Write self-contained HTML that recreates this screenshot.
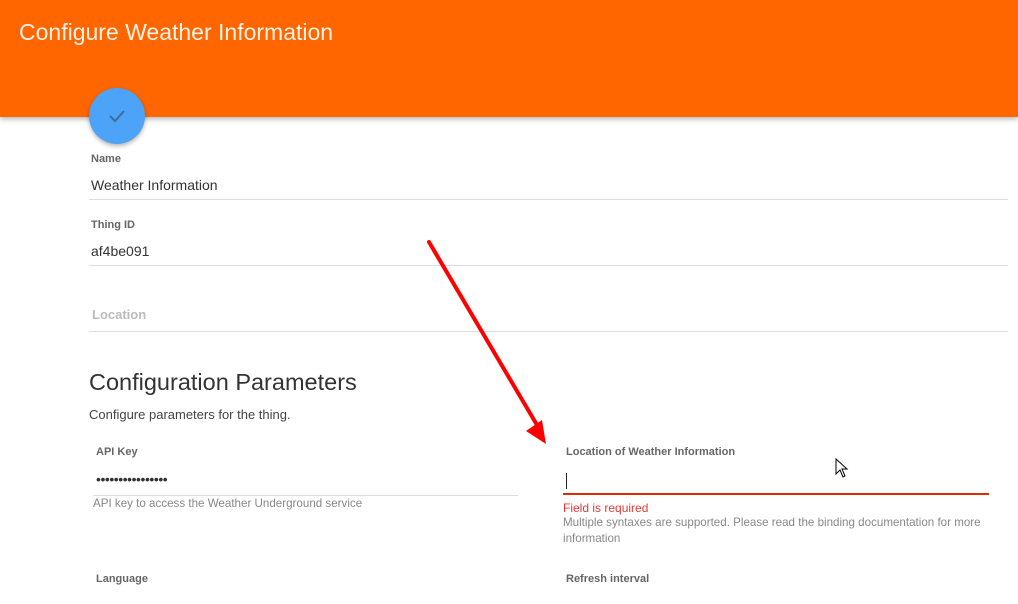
<!DOCTYPE html>
<html><head><meta charset="utf-8"><style>
body{margin:0;width:1018px;height:604px;overflow:hidden;background:#fff;font-family:"Liberation Sans",sans-serif;position:relative}
.a{position:absolute;white-space:nowrap}
.hdr{position:absolute;left:0;top:0;width:1018px;height:117px;background:#ff6600;box-shadow:0 2px 5px rgba(0,0,0,.3)}
.lbl{font-size:11px;font-weight:bold;color:#666}
.val{font-size:14px;color:#333}
.ln{position:absolute;height:1px;background:#ddd}
.hint{font-size:11.6px;color:#888}
</style></head><body>
<div class="hdr"></div>
<div class="a" style="left:19px;top:19px;font-size:23px;color:#fff3e6">Configure Weather Information</div>
<div class="a" style="left:89px;top:88px;width:56px;height:56px;border-radius:50%;background:#4da3f7;box-shadow:0 2px 5px rgba(0,0,0,.3)"></div>
<svg class="a" style="left:107px;top:106px" width="20" height="20"><path d="M3 10 L8 15 L17 5" fill="none" stroke="#3e6d9c" stroke-width="2"/></svg>

<div class="a lbl" style="left:91px;top:153px">Name</div>
<div class="a val" style="left:91px;top:177px">Weather Information</div>
<div class="ln" style="left:89px;top:199px;width:919px"></div>
<div class="a lbl" style="left:91px;top:219px">Thing ID</div>
<div class="a val" style="left:91px;top:243px">af4be091</div>
<div class="ln" style="left:89px;top:265px;width:919px"></div>
<div class="a" style="left:92px;top:307px;font-size:13px;font-weight:bold;color:#bbb">Location</div>
<div class="ln" style="left:89px;top:331px;width:919px"></div>

<div class="a" style="left:89px;top:369px;font-size:23.5px;color:#333">Configuration Parameters</div>
<div class="a" style="left:89px;top:407px;font-size:13px;color:#444">Configure parameters for the thing.</div>

<div class="a lbl" style="left:96px;top:446px">API Key</div>
<div class="a" style="left:96px;top:471px;font-size:14px;color:#333;letter-spacing:-0.45px">••••••••••••••••</div>
<div class="ln" style="left:93px;top:495px;width:425px"></div>
<div class="a hint" style="left:93px;top:497px">API key to access the Weather Underground service</div>

<div class="a lbl" style="left:566px;top:446px">Location of Weather Information</div>
<div class="a" style="left:566px;top:473px;width:1px;height:16px;background:#222"></div>
<div class="a" style="left:563px;top:493px;width:426px;height:2px;background:#dd2c00"></div>
<div class="a" style="left:563px;top:501px;font-size:12px;color:#e53935">Field is required</div>
<div class="a hint" style="left:563px;top:516px">Multiple syntaxes are supported. Please read the binding documentation for more</div>
<div class="a hint" style="left:563px;top:532px">information</div>

<div class="a lbl" style="left:96px;top:573px">Language</div>
<div class="a lbl" style="left:566px;top:573px">Refresh interval</div>

<svg class="a" style="left:834px;top:458px" width="16" height="22"><path d="M2 1 L2 16 L6 12 L9 19 L11 18 L8 11 L13 11 Z" fill="#fff" stroke="#000" stroke-width="1"/></svg>

<svg class="a" style="left:0;top:0" width="1018" height="604">
<line x1="429" y1="242" x2="537" y2="425" stroke="#ff0000" stroke-width="4" stroke-linecap="round"/>
<polygon points="546,444 526,431 542,420" fill="#ff0000"/>
</svg>
</body></html>
